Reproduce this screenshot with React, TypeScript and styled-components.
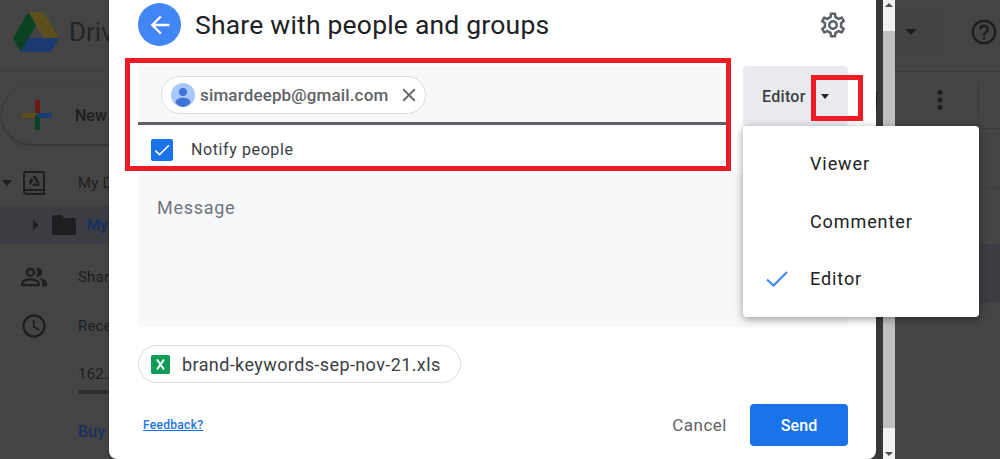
import React from 'react';
import styled, { createGlobalStyle } from 'styled-components';
import {
  MdArrowBack,
  MdOutlineSettings,
  MdClose,
  MdCheck,
  MdOutlinePeopleAlt,
  MdOutlineAccessTime,
  MdMoreVert,
  MdHelpOutline,
  MdOutlineDelete,
} from 'react-icons/md';

const GlobalStyle = createGlobalStyle`
  html, body {
    margin: 0;
    padding: 0;
    background: #444444;
    font-family: Roboto, "Liberation Sans", sans-serif;
  }
`;

const Page = styled.div`
  position: relative;
  display: flex;
  width: 1000px;
  height: 459px;
  overflow: hidden;
  background: #444444;
`;

/* ---- dimmed Drive page behind the dialog ---- */

const Sidebar = styled.aside`
  flex: 0 0 109px;
  display: flex;
  flex-direction: column;
  overflow: hidden;
  color: #1d1e20;
  white-space: nowrap;
`;

const Brand = styled.div`
  flex: 0 0 71px;
  display: flex;
  align-items: flex-start;
  gap: 10px;
  padding: 12px 0 0 13px;
  box-sizing: border-box;
  border-bottom: 1px solid #3c3c3c;
  font-size: 26px;
  line-height: 40px;
  color: #232425;
`;

const NewButton = styled.div`
  display: flex;
  align-items: center;
  flex: 0 0 58px;
  width: 150px;
  margin: 15px 0 0 2px;
  padding-left: 20px;
  gap: 23px;
  box-sizing: border-box;
  border-radius: 29px;
  background: #444444;
  box-shadow: 0 1px 3px rgba(0, 0, 0, 0.35);
  font-size: 16px;
  font-weight: 500;
  color: #1c1d1f;
`;

const NavRow = styled.div<{ $top: number; $active?: boolean }>`
  display: flex;
  align-items: center;
  flex: 0 0 38px;
  margin-top: ${(p) => p.$top}px;
  background: ${(p) => (p.$active ? '#3b3d42' : 'transparent')};
  font-size: 15px;
  letter-spacing: 0.2px;
  font-weight: ${(p) => (p.$active ? 700 : 400)};
  color: ${(p) => (p.$active ? '#16305e' : '#1d1e20')};
`;

const Caret = styled.span<{ $side?: boolean; $left: number }>`
  flex: none;
  width: 0;
  height: 0;
  margin-left: ${(p) => p.$left}px;
  ${(p) =>
    p.$side
      ? 'border-top: 5px solid transparent; border-bottom: 5px solid transparent; border-left: 6px solid #1d1e20;'
      : 'border-left: 5.5px solid transparent; border-right: 5.5px solid transparent; border-top: 6px solid #1d1e20;'}
`;

const NavIcon = styled.span<{ $left: number; $width: number }>`
  flex: none;
  display: flex;
  align-items: center;
  justify-content: center;
  width: ${(p) => p.$width}px;
  margin-left: ${(p) => p.$left}px;
  color: #1d1e20;
  font-size: 28px;
`;

const NavLabel = styled.span<{ $left: number }>`
  margin-left: ${(p) => p.$left}px;
`;

const StorageBar = styled.div`
  flex: 0 0 4px;
  width: 140px;
  margin: -3px 0 0 78px;
  background: #2f2f2f;
`;

const BuyLabel = styled.div`
  margin: 29px 0 0 78px;
  font-size: 16px;
  font-weight: 500;
  letter-spacing: 0.2px;
  line-height: 18px;
  color: #16305e;
`;

/* ---- dialog ---- */

const Dialog = styled.main`
  flex: 0 0 767px;
  height: 459px;
  box-sizing: border-box;
  padding: 3px 28px 0 29px;
  background: #ffffff;
  border-radius: 0 0 8px 8px;
  box-shadow: 0 0 3px rgba(0, 0, 0, 0.4);
  display: flex;
  flex-direction: column;
`;

const Header = styled.header`
  display: flex;
  align-items: center;
  flex: 0 0 43px;
`;

const BackButton = styled.button`
  flex: none;
  display: flex;
  align-items: center;
  justify-content: center;
  width: 43px;
  height: 43px;
  padding: 0;
  border: 0;
  border-radius: 50%;
  background: #4285f4;
  color: #ffffff;
  font-size: 28px;
`;

const Title = styled.h1`
  margin: 0 0 0 14px;
  font-size: 26.5px;
  line-height: 32px;
  letter-spacing: 0.2px;
  font-weight: 400;
  color: #202124;
`;

const SettingsButton = styled.span`
  margin-left: auto;
  margin-right: 0;
  display: flex;
  color: #5f6368;
  font-size: 30px;
`;

const ShareRow = styled.div`
  display: flex;
  align-items: flex-start;
  gap: 12px;
  margin-top: 20px;
  flex: 0 0 60px;
`;

const RecipientField = styled.div`
  flex: 1;
  height: 59px;
  box-sizing: border-box;
  display: flex;
  align-items: flex-start;
  padding: 10px 0 0 23px;
  background: #f7f8fa;
  border-radius: 4px 4px 0 0;
  border-bottom: 3px solid #5f6368;
`;

const Chip = styled.div`
  display: flex;
  align-items: center;
  box-sizing: border-box;
  border: 1px solid #dadce0;
  background: #ffffff;
`;

const RecipientChip = styled(Chip)`
  width: 265px;
  height: 38px;
  border-radius: 19px;
  padding-left: 9px;
`;

const Email = styled.span`
  margin-left: 5px;
  font-size: 17px;
  font-weight: 500;
  letter-spacing: 0.15px;
  color: #5f6368;
`;

const ChipClose = styled.span`
  display: flex;
  margin-left: auto;
  margin-right: 5px;
  font-size: 22px;
  color: #5f6368;
`;

const RoleButton = styled.div`
  flex: 0 0 105px;
  height: 60px;
  box-sizing: border-box;
  display: flex;
  align-items: center;
  padding-left: 19px;
  gap: 15px;
  border-radius: 4px;
  background: #e8eaed;
  font-size: 16px;
  font-weight: 500;
  letter-spacing: 0.3px;
  color: #3c4043;
`;

const RoleCaret = styled.span`
  width: 0;
  height: 0;
  border-left: 4.5px solid transparent;
  border-right: 4.5px solid transparent;
  border-top: 5px solid #202124;
`;

const NotifyRow = styled.label`
  display: flex;
  align-items: center;
  gap: 18px;
  margin-top: 13px;
  padding-left: 13px;
  flex: 0 0 22px;
  font-size: 16px;
  line-height: 20px;
  letter-spacing: 0.6px;
  color: #3c4043;
`;

const Checkbox = styled.span`
  display: flex;
  align-items: center;
  justify-content: center;
  width: 22px;
  height: 22px;
  border-radius: 2px;
  background: #1a73e8;
  color: #ffffff;
  font-size: 20px;
`;

const NotifyText = styled.span`
  margin-top: -1px;
`;

const MessageBox = styled.div`
  flex: 0 0 153px;
  box-sizing: border-box;
  margin-top: 13px;
  padding: 22px 19px;
  border-radius: 4px;
  background: #f7f8fa;
  font-size: 18px;
  line-height: 24px;
  letter-spacing: 0.7px;
  color: #70757a;
`;

const FileChip = styled(Chip)`
  flex: 0 0 38px;
  align-self: flex-start;
  width: 323px;
  margin-top: 18px;
  padding-left: 12px;
  border-radius: 19px;
`;

const FileName = styled.span`
  margin-left: 12px;
  font-size: 18px;
  letter-spacing: 0.4px;
  color: #3c4043;
`;

const Footer = styled.footer`
  display: flex;
  align-items: center;
  margin-top: 21px;
  flex: 0 0 42px;
`;

const FeedbackLink = styled.a`
  margin-left: 5px;
  font-size: 12px;
  font-weight: 500;
  letter-spacing: 0.3px;
  color: #1a73e8;
  text-decoration: underline;
`;

const CancelButton = styled.span`
  margin-left: auto;
  margin-right: 23px;
  font-size: 17px;
  font-weight: 400;
  letter-spacing: 0.5px;
  color: #5f6368;
`;

const SendButton = styled.button`
  width: 98px;
  height: 42px;
  border: 0;
  padding: 0;
  border-radius: 4px;
  background: #1a73e8;
  color: #ffffff;
  font-family: inherit;
  font-size: 16px;
  font-weight: 500;
  letter-spacing: 0.1px;
`;

/* ---- page scrollbar and right side of Drive ---- */

const Gutter = styled.div`
  flex: 0 0 7px;
  box-sizing: border-box;
  display: flex;
  justify-content: flex-end;
  align-items: flex-start;
  padding-top: 88px;
  overflow: hidden;
  background: #383838;
  color: #1d1e20;
  font-size: 24px;
`;

const Scrollbar = styled.div`
  flex: 0 0 12px;
  display: flex;
  flex-direction: column;
  background: #f1f1f1;
`;

const ScrollArrow = styled.span<{ $up?: boolean }>`
  flex: 0 0 31px;
  display: flex;
  justify-content: center;
  align-items: ${(p) => (p.$up ? 'flex-start' : 'flex-end')};
  padding: 3px 0;
  box-sizing: border-box;
  &::before {
    content: '';
    border-left: 4px solid transparent;
    border-right: 4px solid transparent;
    ${(p) => (p.$up ? 'border-bottom: 4px solid #505050;' : 'border-top: 4px solid #505050;')}
  }
`;

const ScrollThumb = styled.div`
  flex: 1;
  background: #c1c1c1;
`;

const DrivePane = styled.section`
  flex: 1;
  display: flex;
  flex-direction: column;
  min-width: 0;
`;

const PaneHeader = styled.div`
  flex: 0 0 72px;
  box-sizing: border-box;
  display: flex;
  align-items: flex-start;
  border-bottom: 1px solid #3c3c3c;
`;

const SearchEnd = styled.div`
  flex: 0 0 50px;
  height: 56px;
  margin-top: 4px;
  display: flex;
  align-items: center;
  justify-content: flex-end;
  padding-right: 28px;
  box-sizing: border-box;
  border-radius: 0 8px 8px 0;
  background: #424442;
`;

const SearchCaret = styled.span`
  width: 0;
  height: 0;
  border-left: 6px solid transparent;
  border-right: 6px solid transparent;
  border-top: 6px solid #1d1e20;
`;

const HelpIcon = styled.span`
  display: flex;
  margin: 17px 0 0 24px;
  font-size: 30px;
  color: #1d1e20;
`;

const PaneToolbar = styled.div`
  flex: 0 0 57px;
  box-sizing: border-box;
  display: flex;
  align-items: center;
  padding-left: 30px;
  border-bottom: 1px solid #3c3c3c;
  color: #1d1e20;
  font-size: 30px;
`;

const ToolbarDivider = styled.span`
  width: 1px;
  height: 38px;
  margin-left: 23px;
  background: #3c3c3c;
`;

const FileRow = styled.div<{ $height: number; $active?: boolean }>`
  flex: 0 0 ${(p) => p.$height}px;
  box-sizing: border-box;
  border-bottom: 1px solid #3c3c3c;
  background: ${(p) => (p.$active ? '#3b3d42' : 'transparent')};
`;

/* ---- floating parts ---- */

const RoleMenu = styled.ul`
  position: absolute;
  left: 743px;
  top: 126px;
  width: 236px;
  height: 191px;
  margin: 0;
  padding: 10px 0;
  box-sizing: border-box;
  list-style: none;
  background: #ffffff;
  border-radius: 4px;
  box-shadow: 0 2px 8px rgba(0, 0, 0, 0.4);
`;

const RoleItem = styled.li`
  position: relative;
  height: 57.5px;
  padding-left: 67px;
  font-size: 18px;
  line-height: 56px;
  letter-spacing: 0.9px;
  color: #202124;
`;

const RoleCheck = styled.span`
  position: absolute;
  left: 23px;
  top: 20px;
  display: flex;
  color: #4285f4;
`;

const RedBox = styled.div<{ $x: number; $y: number; $w: number; $h: number }>`
  position: absolute;
  left: ${(p) => p.$x}px;
  top: ${(p) => p.$y}px;
  width: ${(p) => p.$w}px;
  height: ${(p) => p.$h}px;
  box-sizing: border-box;
  border: 5px solid #ed1c24;
  pointer-events: none;
`;

const DriveLogo = () => (
  <svg width="46" height="41" viewBox="0 0 46 41" style={{ flex: 'none' }}>
    <path d="M15.5 0 0 26l7.7 14L23 13.5z" fill="#0a4222" />
    <path d="M15.5 0h15.2L46 26H30.8z" fill="#5c4f1c" />
    <path d="M15 26h31l-7.7 14H7.7z" fill="#1b3a70" />
  </svg>
);

const MiniDriveIcon = () => (
  <svg width="22" height="24" viewBox="0 0 22 24">
    <path d="M3 1h16a2 2 0 0 1 2 2v20H4a3 3 0 0 1-3-3V3a2 2 0 0 1 2-2z" fill="none" stroke="#1d1e20" strokeWidth="2" />
    <path d="M2 19h18" stroke="#1d1e20" strokeWidth="2" />
    <path d="M9.5 5h3l4 7h-3zM8.5 6.5l1.6 2.8L7.6 14l-1.7-3zM9 15l1.5-2.6h6.7L15.7 15z" fill="#1d1e20" />
  </svg>
);

const PlusLogo = () => (
  <svg width="30" height="30" viewBox="0 0 30 30" style={{ flex: 'none' }}>
    <rect x="13" y="0" width="5" height="15" fill="#6c1a14" />
    <rect x="0" y="13" width="15" height="5" fill="#5c4f1c" />
    <rect x="13" y="15" width="5" height="15" fill="#0a4222" />
    <rect x="15" y="13" width="15" height="5" fill="#1b3a70" />
  </svg>
);

const FolderIcon = () => (
  <svg width="24" height="20" viewBox="0 0 24 20">
    <path d="M2.5 0h7l2.5 3h9.5A2.5 2.5 0 0 1 24 5.5v12a2.5 2.5 0 0 1-2.5 2.5h-19A2.5 2.5 0 0 1 0 17.500v-15A2.500 2.500 0 0 1 2.500 0z" fill="#1d1e20" />
  </svg>
);

const Avatar = () => (
  <svg width="24" height="24" viewBox="0 0 24 24" style={{ flex: 'none' }}>
    <circle cx="12" cy="12" r="12" fill="#a8c7fa" />
    <circle cx="12" cy="9" r="4" fill="#3f73d9" />
    <path d="M4.500 19.500c0-3 3.500-4.700 7.500-4.700s7.500 1.700 7.500 4.700A12 12 0 0 1 12 24a12 12 0 0 1-7.500-4.500z" fill="#3f73d9" />
  </svg>
);

const ExcelIcon = () => (
  <svg width="19" height="19" viewBox="0 0 19 19" style={{ flex: 'none' }}>
    <rect width="19" height="19" rx="1.5" fill="#0f9d58" />
    <path d="M6 4.500 13 14.500M13 4.500 6 14.500" stroke="#ffffff" strokeWidth="2" />
  </svg>
);

const App: React.FC = () => (
  <Page>
    <GlobalStyle />

    <Sidebar>
      <Brand>
        <DriveLogo />
        <span>Drive</span>
      </Brand>
      <NewButton>
        <PlusLogo />
        <span>New</span>
      </NewButton>
      <NavRow $top={20}>
        <Caret $left={2} />
        <NavIcon $left={11} $width={22}>
          <MiniDriveIcon />
        </NavIcon>
        <NavLabel $left={33}>My Drive</NavLabel>
      </NavRow>
      <NavRow $top={4} $active>
        <Caret $side $left={33} />
        <NavIcon $left={13} $width={24}>
          <FolderIcon />
        </NavIcon>
        <NavLabel $left={11}>My Drive</NavLabel>
      </NavRow>
      <NavRow $top={14}>
        <NavIcon $left={20} $width={28}>
          <MdOutlinePeopleAlt />
        </NavIcon>
        <NavLabel $left={30}>Shared with me</NavLabel>
      </NavRow>
      <NavRow $top={11}>
        <NavIcon $left={20} $width={28}>
          <MdOutlineAccessTime />
        </NavIcon>
        <NavLabel $left={30}>Recent</NavLabel>
      </NavRow>
      <NavRow $top={10}>
        <NavLabel $left={78}>162.</NavLabel>
      </NavRow>
      <StorageBar />
      <BuyLabel>Buy storage</BuyLabel>
    </Sidebar>

    <Dialog>
      <Header>
        <BackButton aria-label="Back">
          <MdArrowBack />
        </BackButton>
        <Title>Share with people and groups</Title>
        <SettingsButton>
          <MdOutlineSettings />
        </SettingsButton>
      </Header>

      <ShareRow>
        <RecipientField>
          <RecipientChip>
            <Avatar />
            <Email>simardeepb@gmail.com</Email>
            <ChipClose>
              <MdClose />
            </ChipClose>
          </RecipientChip>
        </RecipientField>
        <RoleButton>
          Editor
          <RoleCaret />
        </RoleButton>
      </ShareRow>

      <NotifyRow>
        <Checkbox>
          <MdCheck />
        </Checkbox>
        <NotifyText>Notify people</NotifyText>
      </NotifyRow>

      <MessageBox>Message</MessageBox>

      <FileChip>
        <ExcelIcon />
        <FileName>brand-keywords-sep-nov-21.xls</FileName>
      </FileChip>

      <Footer>
        <FeedbackLink href="#">Feedback?</FeedbackLink>
        <CancelButton>Cancel</CancelButton>
        <SendButton>Send</SendButton>
      </Footer>
    </Dialog>

    <Gutter>
      <span>
        <MdOutlineDelete />
      </span>
    </Gutter>
    <Scrollbar>
      <ScrollArrow $up />
      <ScrollThumb />
      <ScrollArrow />
    </Scrollbar>

    <DrivePane>
      <PaneHeader>
        <SearchEnd>
          <SearchCaret />
        </SearchEnd>
        <HelpIcon>
          <MdHelpOutline />
        </HelpIcon>
      </PaneHeader>
      <PaneToolbar>
        <MdMoreVert />
        <ToolbarDivider />
      </PaneToolbar>
      <FileRow $height={59} />
      <FileRow $height={57} />
      <FileRow $height={58} $active />
    </DrivePane>

    <RoleMenu>
      <RoleItem>Viewer</RoleItem>
      <RoleItem>Commenter</RoleItem>
      <RoleItem>
        <RoleCheck>
          <svg width="22" height="16" viewBox="0 0 22 16">
            <path d="M1 8.500 7.500 14.500 21 1" fill="none" stroke="currentColor" strokeWidth="2" />
          </svg>
        </RoleCheck>
        Editor
      </RoleItem>
    </RoleMenu>

    <RedBox $x={125} $y={58} $w={606} $h={113} />
    <RedBox $x={811} $y={75} $w={52} $h={46} />
  </Page>
);

export default App;
